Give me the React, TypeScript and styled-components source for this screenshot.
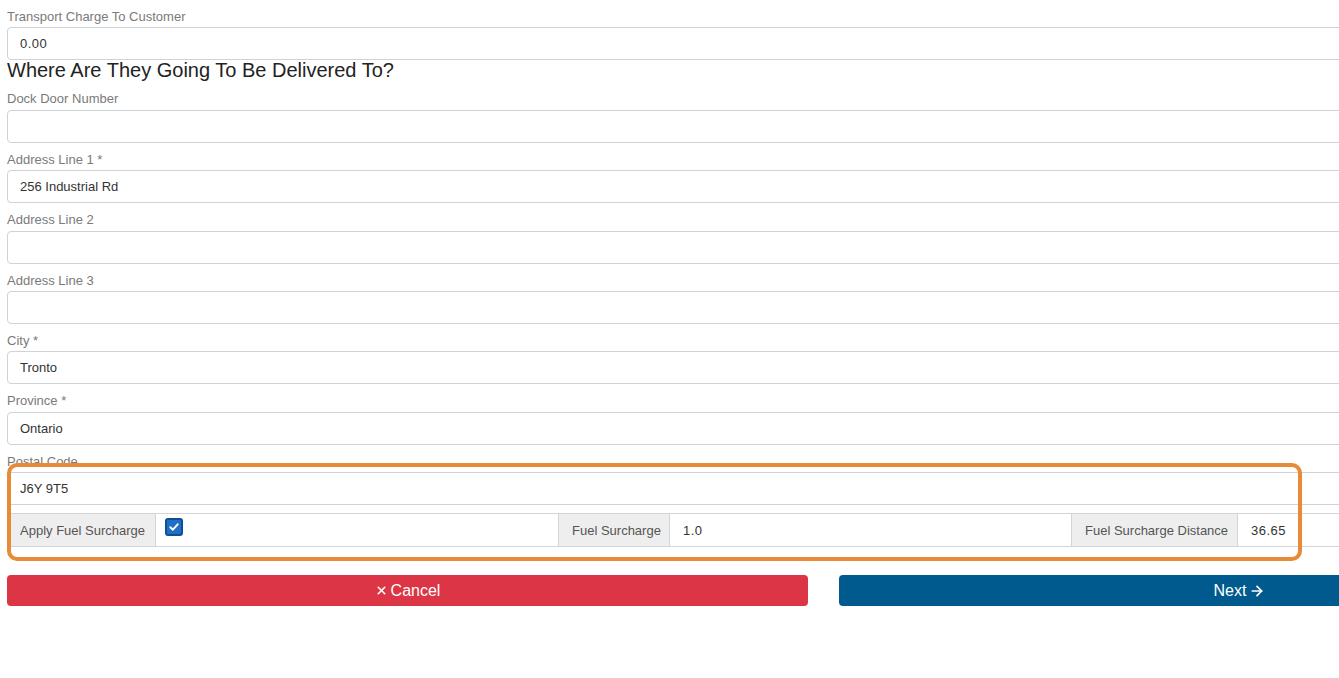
import React from "react";
import styled, { createGlobalStyle } from "styled-components";
import { ArrowRight, X } from "lucide-react";

const Global = createGlobalStyle`
  html, body { margin: 0; padding: 0; background: #fff; overflow: hidden; }
  body { font-family: "Liberation Sans", Arial, sans-serif; }
`;

const Page = styled.div`
  position: relative;
  width: 1633px;
  padding: 8px 0 0 7px;
`;

const Field = styled.div`
  display: flex;
  flex-direction: column;
  margin-bottom: 8px;
`;

const Label = styled.label`
  font-size: 13px;
  line-height: 17.4px;
  color: #7a7a7a;
  margin-bottom: 2px;
`;

const Input = styled.div`
  box-sizing: border-box;
  height: 33px;
  border: 1px solid #cfd3d6;
  border-radius: 4px;
  padding: 0 12px;
  display: flex;
  align-items: center;
  font-size: 13px;
  color: #333;
`;

const Heading = styled.h3`
  margin: -10px 0 8px;
  font-size: 20px;
  font-weight: normal;
  line-height: 24px;
  color: #222;
`;

const FuelRow = styled.div`
  display: grid;
  grid-template-columns: 149px 402px 112px 401px 167px 1fr;
  height: 34px;
  box-sizing: border-box;
  border-top: 1px solid #d3d6d8;
  border-bottom: 1px solid #d3d6d8;
`;

const Addon = styled.div<{ $first?: boolean }>`
  background: #eeeeee;
  border-right: 1px solid #d3d6d8;
  border-left: ${(p) => (p.$first ? "none" : "1px solid #d3d6d8")};
  display: flex;
  align-items: center;
  padding-left: 13px;
  font-size: 13px;
  color: #555;
`;

const Cell = styled.div`
  display: flex;
  align-items: center;
  padding-left: 13px;
  font-size: 13px;
  color: #333;
  letter-spacing: 0.5px;
`;

const CheckBox = styled.span`
  box-sizing: border-box;
  width: 18px;
  height: 18px;
  margin-top: -6px;
  margin-left: -4px;
  border-radius: 3px;
  background: #1f6fc5;
  border: 2px solid #0e4f96;
  display: flex;
  align-items: center;
  justify-content: center;
`;

const Buttons = styled.div`
  display: grid;
  grid-template-columns: 801px 801px;
  column-gap: 31px;
  margin-top: 28px;
`;

const Button = styled.button<{ $variant: "danger" | "primary" }>`
  height: 31px;
  border: none;
  border-radius: 4px;
  background: ${(p) => (p.$variant === "danger" ? "#dc3545" : "#005a8e")};
  color: #fff;
  font-family: "Liberation Sans", Arial, sans-serif;
  font-size: 16px;
  display: flex;
  align-items: center;
  justify-content: center;
  gap: 3px;
`;

const Highlight = styled.div`
  position: absolute;
  left: 7px;
  top: 463px;
  width: 1295px;
  height: 98px;
  box-sizing: border-box;
  border: 4px solid #e98a38;
  border-radius: 10px;
  pointer-events: none;
`;

const fields: { label: string; value: string }[] = [
  { label: "Dock Door Number", value: "" },
  { label: "Address Line 1 *", value: "256 Industrial Rd" },
  { label: "Address Line 2", value: "" },
  { label: "Address Line 3", value: "" },
  { label: "City *", value: "Tronto" },
  { label: "Province *", value: "Ontario" },
  { label: "Postal Code", value: "J6Y 9T5" },
];

export default function App() {
  return (
    <>
      <Global />
      <Page>
        <Field>
          <Label>Transport Charge To Customer</Label>
          <Input style={{ letterSpacing: "0.5px" }}>0.00</Input>
        </Field>
        <Heading>Where Are They Going To Be Delivered To?</Heading>
        {fields.map((f) => (
          <Field key={f.label}>
            <Label>{f.label}</Label>
            <Input>{f.value}</Input>
          </Field>
        ))}
        <FuelRow>
          <Addon $first>Apply Fuel Surcharge</Addon>
          <Cell>
            <CheckBox>
              <svg width="12" height="12" viewBox="0 0 12 12">
                <path d="M2.3 6.2 L4.9 8.7 L9.7 3.3" fill="none" stroke="#fff" strokeWidth="1.9" strokeLinecap="round" strokeLinejoin="round" />
              </svg>
            </CheckBox>
          </Cell>
          <Addon>Fuel Surcharge</Addon>
          <Cell>1.0</Cell>
          <Addon>Fuel Surcharge Distance</Addon>
          <Cell>36.65</Cell>
        </FuelRow>
        <Buttons>
          <Button $variant="danger">
            <X size={13} strokeWidth={3} />
            <span>Cancel</span>
          </Button>
          <Button $variant="primary">
            <span>Next</span>
            <ArrowRight size={16} strokeWidth={2.6} />
          </Button>
        </Buttons>
        <Highlight />
      </Page>
    </>
  );
}
